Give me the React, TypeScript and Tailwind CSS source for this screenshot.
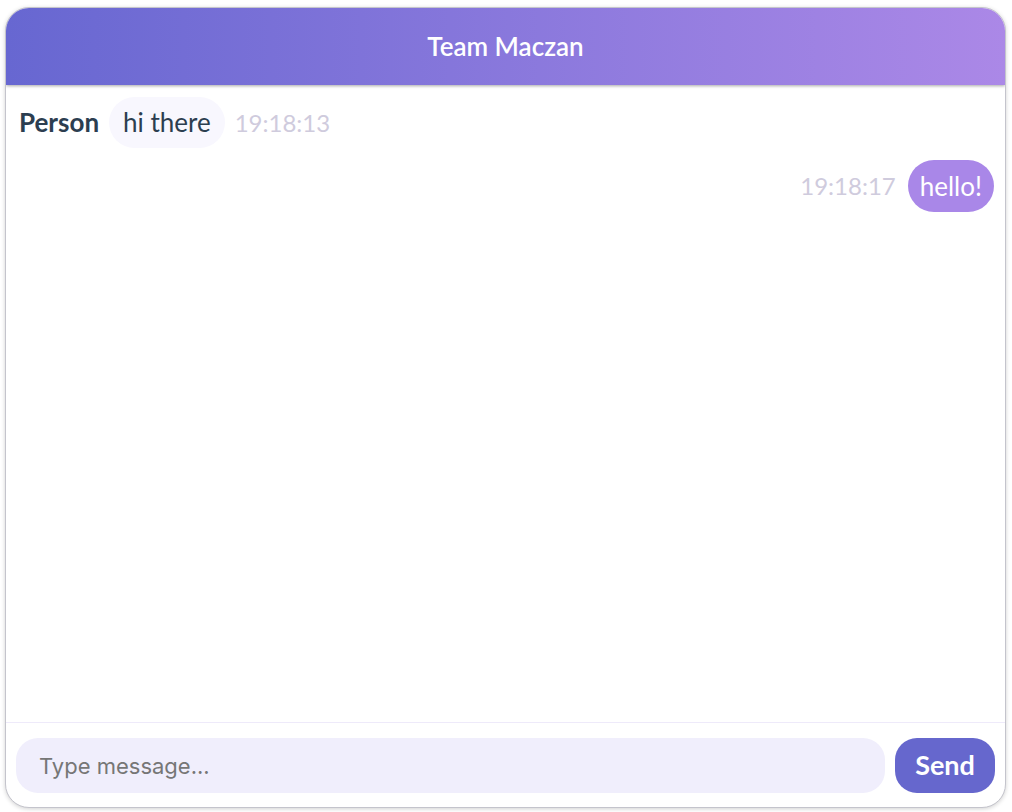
import React from "react";

const App = () => {
  return (
    <div className="h-[812px] w-full bg-white pt-[7px] pl-[5px] pr-[6px] pb-[4px]">
      <div
        className="flex h-full flex-col overflow-hidden rounded-[24px] border border-[#c4c4cc] bg-white shadow-[0_1px_4px_rgba(0,0,0,0.18)]"
        style={{ fontFamily: "Lato, 'Noto Sans', sans-serif" }}
      >
        <div className="relative z-10 flex h-[77px] shrink-0 items-center justify-center bg-gradient-to-r from-[#6767d1] to-[#ab88e7] shadow-[0_1px_3px_rgba(0,0,0,0.35)]">
          <h1 className="text-[26px] font-semibold text-white">Team Maczan</h1>
        </div>

        <div className="flex flex-1 flex-col gap-3 pl-[13px] pr-[11px] pt-[12px]">
          <div className="flex items-center gap-[10px]">
            <span className="text-[26px] font-bold text-[#2c3e50]">Person</span>
            <div className="rounded-[26px] bg-[#f8f7fe] px-[14px] py-[8px] text-[26px] leading-[35px] text-[#2c3e50]">
              hi there
            </div>
            <span className="text-[24px] text-[#cfcbdd]">19:18:13</span>
          </div>

          <div className="flex items-center justify-end gap-[12px]">
            <span className="text-[24px] text-[#cfcbdd]">19:18:17</span>
            <div className="rounded-[26px] bg-[#a987e8] px-[12px] py-[8px] text-[26px] leading-[36px] text-white">
              hello!
            </div>
          </div>
        </div>

        <div className="flex shrink-0 items-center gap-[10px] border-t border-[#eeeafa] px-[10px] pt-[15px] pb-[14px]">
          <input
            placeholder="Type message..."
            className="h-[55px] flex-1 rounded-[22px] bg-[#f0eefc] px-[23px] text-[22px] text-[#333] outline-none placeholder:text-[#767676]"
            style={{ fontFamily: "Inter, 'Liberation Sans', sans-serif" }}
          />
          <button className="h-[55px] w-[100px] rounded-[22px] bg-[#6667cd] text-[27px] font-bold text-white">
            Send
          </button>
        </div>
      </div>
    </div>
  );
};

export default App;
